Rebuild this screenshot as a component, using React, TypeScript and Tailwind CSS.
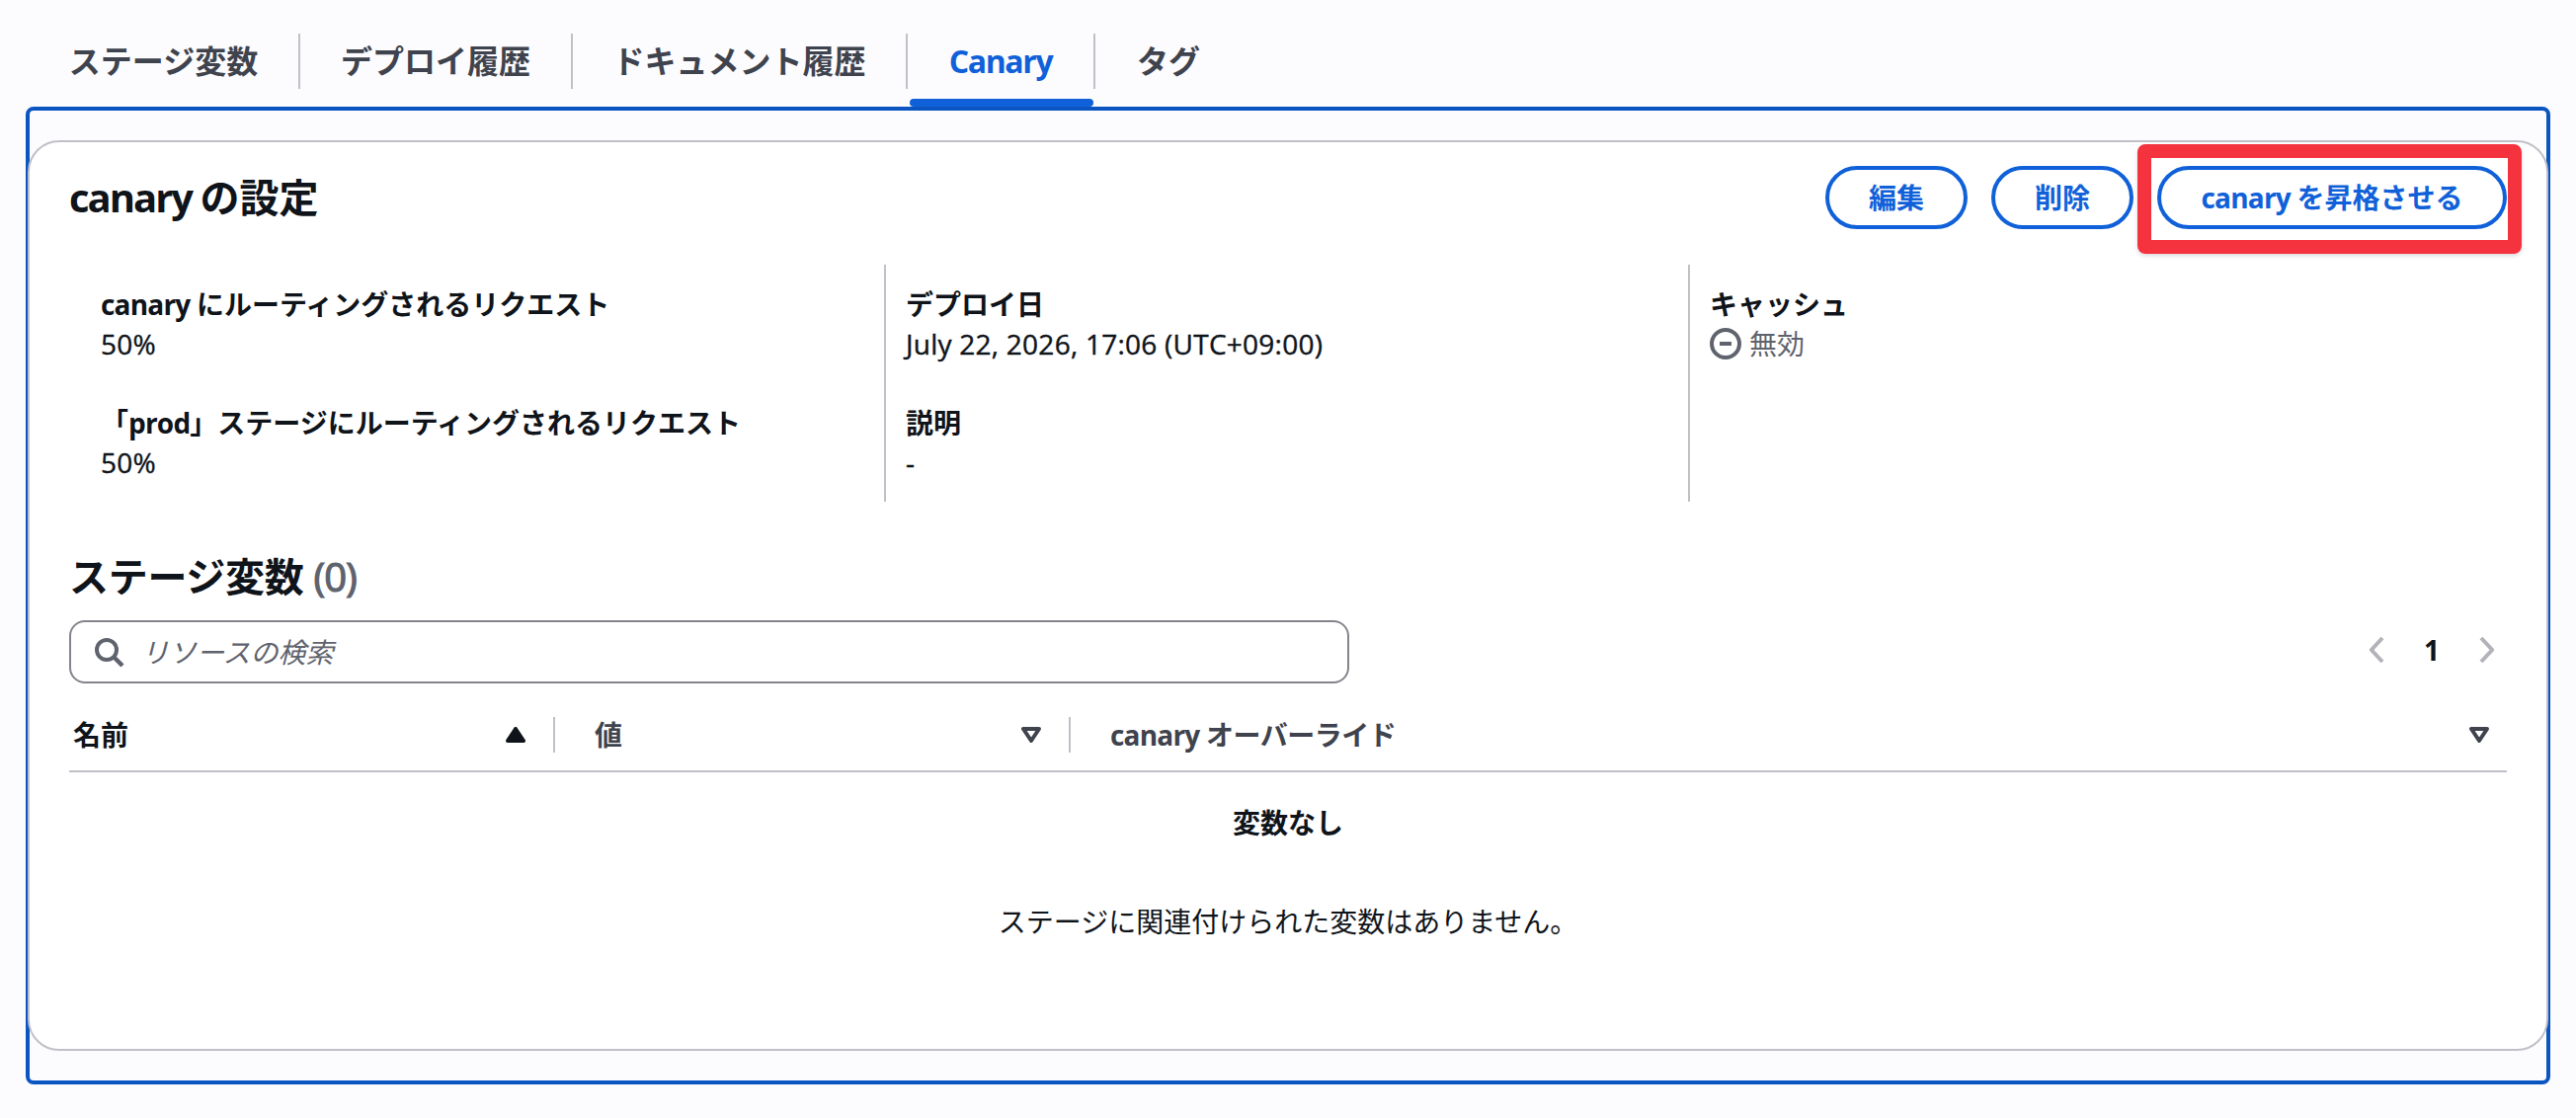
import type { ReactNode } from "react";
import clsx from "clsx";

const tabs = [
  { label: "ステージ変数", width: "w-[277px]" },
  { label: "デプロイ履歴", width: "w-[276px]" },
  { label: "ドキュメント履歴", width: "w-[339px]" },
  { label: "Canary", width: "w-[190px]", active: true },
  { label: "タグ", width: "w-[148px]" },
];

const TabBar: React.FC = () => (
  <nav className="flex h-[108px] pl-[27px]">
    {tabs.map((tab, index) => (
      <div key={tab.label} className={clsx("flex flex-col pt-[34px]", tab.width)}>
        <div
          className={clsx(
            "flex h-14 items-center justify-center text-[32px] font-bold whitespace-nowrap",
            index < tabs.length - 1 && "border-r-2 border-[#c0c0c8]",
            tab.active ? "tracking-[-1.4px] text-[#1061d9]" : "text-[#3f434d]",
            index === 0 && "pl-0.5",
          )}
        >
          {tab.label}
        </div>
        {tab.active && (
          <div className="mt-2.5 mr-0.5 ml-0.5 h-2 rounded bg-[#1061d9]" />
        )}
      </div>
    ))}
  </nav>
);

const ActionButton: React.FC<{ className: string; children: ReactNode }> = ({
  className,
  children,
}) => (
  <button
    className={clsx(
      "flex h-16 items-center justify-center rounded-full border-4 border-[#1061d9] bg-white text-[28px] font-bold whitespace-nowrap text-[#1061d9]",
      className,
    )}
  >
    {children}
  </button>
);

const Latin: React.FC<{ children: ReactNode }> = ({ children }) => (
  <span className="tracking-[-0.8px] whitespace-pre">{children}</span>
);

const KeyValue: React.FC<{ label: ReactNode; children: ReactNode }> = ({
  label,
  children,
}) => (
  <div className="text-[28px] leading-10 whitespace-nowrap">
    <dt className="font-bold">{label}</dt>
    <dd className="h-10 tracking-[0.25px] [-webkit-text-stroke:0.4px_#0f141a]">{children}</dd>
  </div>
);

const SortIcon: React.FC<{ ascending?: boolean }> = ({ ascending }) => (
  <svg viewBox="0 0 20 16" className="h-4 w-5" strokeLinejoin="round">
    {ascending ? (
      <path d="M2 14 10 2l8 12Z" fill="#0f141a" stroke="#0f141a" strokeWidth="4" />
    ) : (
      <path d="M2 2h16l-8 12Z" fill="none" stroke="#3f434d" strokeWidth="4" />
    )}
  </svg>
);

const Chevron: React.FC<{ direction: "left" | "right" }> = ({ direction }) => (
  <svg viewBox="0 0 16 28" className="h-7 w-4" fill="none" stroke="#b2b2ba" strokeWidth="4">
    <path
      d={direction === "left" ? "M14 2 2.8 14 14 26" : "M2 2l11.2 12L2 26"}
      strokeLinejoin="round"
    />
  </svg>
);

const SettingsHeader: React.FC = () => (
  <header className="flex h-[88px] items-end justify-between">
    <h2 className="flex h-16 items-center text-[40px] font-bold">
      <span className="tracking-[-2px] whitespace-pre">canary </span>の設定
    </h2>
    <div className="flex gap-6">
      <ActionButton className="w-36">編集</ActionButton>
      <ActionButton className="w-36">削除</ActionButton>
      <div className="relative">
        <ActionButton className="w-[354px]">
          <Latin>canary </Latin>を昇格させる
        </ActionButton>
        <div className="pointer-events-none absolute -top-[22px] -left-5 h-[111px] w-[389px] rounded-lg border-[14px] border-[#f5333f] shadow-[0_2px_4px_rgba(0,0,0,0.15)]" />
      </div>
    </div>
  </header>
);

const Summary: React.FC = () => (
  <dl className="mt-9 flex h-60">
    <div className="flex w-[825px] flex-col gap-10 py-5 pl-8">
      <KeyValue label={<><Latin>canary </Latin>にルーティングされるリクエスト</>}>50%</KeyValue>
      <KeyValue label={<>「<Latin>prod</Latin>」ステージにルーティングされるリクエスト</>}>50%</KeyValue>
    </div>
    <div className="flex w-[814px] flex-col gap-10 border-l-2 border-[#c0c0c8] py-5 pl-5">
      <KeyValue label="デプロイ日">July 22, 2026, 17:06 (UTC+09:00)</KeyValue>
      <KeyValue label="説明">-</KeyValue>
    </div>
    <div className="flex-1 border-l-2 border-[#c0c0c8] py-5 pl-5">
      <KeyValue label="キャッシュ">
        <span className="flex h-10 items-center gap-2 tracking-normal text-[#5f636d] [-webkit-text-stroke:0]">
          <svg viewBox="0 0 32 32" className="size-8" fill="none" stroke="currentColor" strokeWidth="4">
            <circle cx="16" cy="16" r="14" />
            <path d="M10 16h12" />
          </svg>
          無効
        </span>
      </KeyValue>
    </div>
  </dl>
);

const TableToolbar: React.FC = () => (
  <div className="flex h-16 items-center justify-between">
    <div className="flex h-16 w-[1296px] items-center rounded-2xl border-2 border-[#84848c] pl-6 text-[28px] text-[#5f636d]">
      <svg viewBox="0 0 32 32" className="size-8" fill="none" stroke="currentColor" strokeWidth="4">
        <circle cx="12" cy="14" r="10" />
        <path d="m19 21 9 9" strokeWidth="4.5" />
      </svg>
      <span className="ml-[15px] italic">リソースの検索</span>
    </div>
    <div className="mr-3 mb-1 flex items-center">
      <Chevron direction="left" />
      <span className="w-24 text-center text-[28px] font-bold">1</span>
      <Chevron direction="right" />
    </div>
  </div>
);

const VariablesTable: React.FC = () => (
  <section className="mt-[50px]">
    <h2 className="mb-[18px] flex h-[52px] items-center gap-2.5 text-[40px] font-bold tracking-[-0.3px]">
      ステージ変数{" "}
      <span className="font-normal tracking-[-1px] text-[#5f636d] [-webkit-text-stroke:1.2px_#5f636d]">
        (0)
      </span>
    </h2>
    <TableToolbar />
    <div className="mt-4 flex h-[74px] items-center border-b-2 border-[#c0c0c8] text-[28px] font-bold">
      <div className="flex h-9 w-[492px] items-center justify-between border-r-2 border-[#c0c0c8] pr-7 pl-1">
        名前
        <SortIcon ascending />
      </div>
      <div className="flex h-9 w-[522px] items-center justify-between border-r-2 border-[#c0c0c8] pr-7 pl-10 text-[#3f434d]">
        値
        <SortIcon />
      </div>
      <div className="flex flex-1 items-center justify-between pr-[18px] pl-10 text-[#3f434d]">
        <span className="tracking-[-0.5px]">
          <Latin>canary </Latin>オーバーライド
        </span>
        <SortIcon />
      </div>
    </div>
    <div className="pt-[31px] text-center text-[28px] leading-10">
      <p className="font-bold">変数なし</p>
      <p className="mt-[60px]">ステージに関連付けられた変数はありません。</p>
    </div>
  </section>
);

const App: React.FC = () => (
  <div className="h-[1132px] w-[2608px] overflow-hidden bg-[#fcfcfe] font-['Open_Sans','Noto_Sans_CJK_JP',sans-serif] text-[#0f141a]">
    <TabBar />
    <main className="mx-[26px] h-[990px] rounded-lg border-4 border-[#0b55c0] pt-[30px]">
      <div className="-mx-0.5 h-[922px] rounded-[32px] border-2 border-[#c0c0c8] bg-white px-10">
        <SettingsHeader />
        <Summary />
        <VariablesTable />
      </div>
    </main>
  </div>
);

export default App;
